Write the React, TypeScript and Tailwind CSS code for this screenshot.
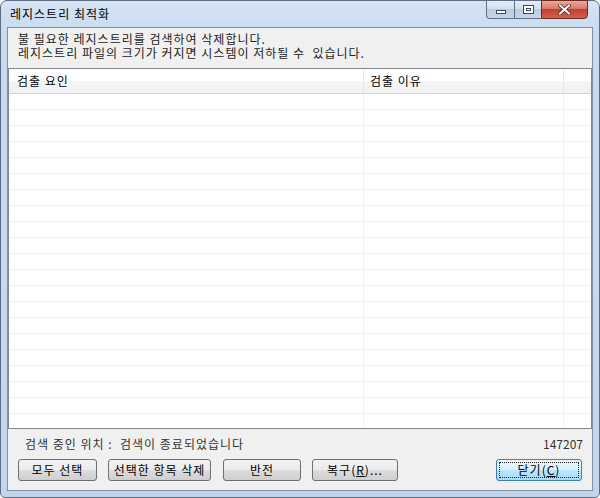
import React from "react";

const font = { fontFamily: '"Noto Sans CJK KR", "DejaVu Sans", sans-serif' };

function Btn({ children, className = "", isDefault = false }: { children: React.ReactNode; className?: string; isDefault?: boolean }) {
  return (
    <div
      className={
        "h-[22px] rounded-[3px] border flex items-center justify-center text-[12px] leading-none tracking-[1px] text-black relative " +
        (isDefault
          ? "border-[#3c7fb1] bg-[linear-gradient(#eaf6fd_0%,#d9f0fc_50%,#bee6fd_50%,#a7d9f5_100%)] "
          : "border-[#707070] bg-[linear-gradient(#f2f2f2_0%,#ebebeb_50%,#dddddd_50%,#cfcfcf_100%)] ") +
        className
      }
    >
      {isDefault && <div className="absolute inset-[2px] border border-dotted border-[#222]" />}
      <span className="relative">{children}</span>
    </div>
  );
}

export default function App() {
  const rows = Array.from({ length: 21 });
  return (
    <div style={font} className="w-[600px] h-[498px] overflow-hidden">
      <div className="w-[600px] h-[498px] rounded-t-[7px] rounded-b-[5px] border border-[#5d6d84] bg-[linear-gradient(#d6e4f4_0%,#c9dbef_30px,#c2d6ec_100%)] flex flex-col">
        {/* title bar */}
        <div className="h-[26px] flex items-start justify-between">
          <div className="pl-[9px] pt-[6px] text-[12px] leading-[14px] tracking-[1px] text-black">레지스트리 최적화</div>
          <div className="flex mr-[11px] -mt-px">
            <div className="w-[28px] h-[19px] rounded-bl-[4px] border border-[#5e6f87] border-r-0 bg-[linear-gradient(#e7eef7_0%,#d3dfee_45%,#b9cbe1_50%,#c6d6ea_100%)] flex items-center justify-center">
              <div className="w-[10px] h-[4px] mt-[5px] border border-[#3b4a5f] bg-white" />
            </div>
            <div className="w-[27px] h-[19px] border border-[#5e6f87] border-r-0 bg-[linear-gradient(#e7eef7_0%,#d3dfee_45%,#b9cbe1_50%,#c6d6ea_100%)] flex items-center justify-center">
              <div className="w-[11px] h-[9px] border border-[#3b4a5f] bg-white flex items-center justify-center">
                <div className="w-[5px] h-[3px] border border-[#3b4a5f]" />
              </div>
            </div>
            <div className="w-[47px] h-[19px] rounded-br-[4px] border border-[#6b2a22] bg-[linear-gradient(#eaa99b_0%,#d8786a_45%,#c5402f_50%,#d0604f_100%)] flex items-center justify-center">
              <svg width="13" height="11" viewBox="0 0 13 11">
                <path d="M2 1.5 L11 9.5 M11 1.5 L2 9.5" stroke="#4a2a22" strokeWidth="3.6" strokeLinecap="square" />
                <path d="M2 1.5 L11 9.5 M11 1.5 L2 9.5" stroke="#ffffff" strokeWidth="2" strokeLinecap="square" />
              </svg>
            </div>
          </div>
        </div>
        {/* client */}
        <div className="flex-1 mx-[6px] mb-[6px] border border-[#7f8fa6] bg-[#f0f0f0] flex flex-col">
          <div className="h-[40px] pl-[10px] pt-[4px] text-[12px] leading-[14px] tracking-[1px] text-[#222] whitespace-pre">
            <div>불 필요한 레지스트리를 검색하여 삭제합니다.</div>
            <div>레지스트리 파일의 크기가 커지면 시스템이 저하될 수  있습니다.</div>
          </div>
          {/* list */}
          <div className="h-[361px] border border-[#828790] bg-white flex flex-col overflow-hidden">
            <div className="h-[25px] shrink-0 flex border-b border-[#d5d5d5] bg-[linear-gradient(#ffffff_0%,#ffffff_50%,#f4f5f7_50%,#f0f1f3_100%)] text-[12px] leading-none tracking-[1px] text-black">
              <div className="w-[355px] shrink-0 border-r border-[#e3e8ee] pl-[8px] flex items-center">검출 요인</div>
              <div className="w-[200px] shrink-0 border-r border-[#e3e8ee] pl-[6px] flex items-center">검출 이유</div>
              <div className="flex-1" />
            </div>
            {rows.map((_, i) => (
              <div key={i} className="h-[16px] shrink-0 flex border-b border-[#f0f0f0]">
                <div className="w-[355px] shrink-0 border-r border-[#f0f0f0]" />
                <div className="w-[200px] shrink-0 border-r border-[#f0f0f0]" />
                <div className="flex-1" />
              </div>
            ))}
          </div>
          {/* status */}
          <div className="flex justify-between items-center pl-[17px] pr-[9px] pt-[8px] h-[22px] text-[12px] leading-none text-[#333] whitespace-pre">
            <span className="tracking-[1px]">검색 중인 위치 :  검색이 종료되었습니다</span>
            <span>147207</span>
          </div>
          <div className="flex items-center pl-[10px] pr-[10px] pt-[8px]">
            <Btn className="w-[79px]">모두 선택</Btn>
            <Btn className="w-[103px] ml-[11px]">선택한 항목 삭제</Btn>
            <Btn className="w-[78px] ml-[12px]">반전</Btn>
            <Btn className="w-[86px] ml-[11px]">
              복구(<span className="underline">R</span>)...
            </Btn>
            <div className="flex-1" />
            <Btn className="w-[86px]" isDefault>
              닫기(<span className="underline">C</span>)
            </Btn>
          </div>
        </div>
      </div>
    </div>
  );
}
